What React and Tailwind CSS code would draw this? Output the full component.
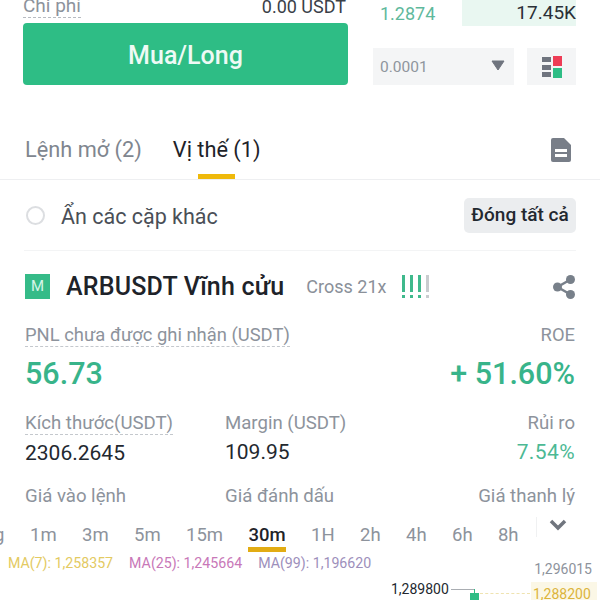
import React from "react";

const FONT = { fontFamily: "Roboto, sans-serif" };
const intervals = ["1m", "3m", "5m", "15m", "30m", "1H", "2h", "4h", "6h", "8h"];

function Stat({ label, value, dashed, right, green, className }) {
  return (
    <div className={`flex flex-col ${right ? "items-end" : "items-start"} ${className || ""}`}>
      <span
        className={`text-[18.6px] leading-[22px] text-[#8d939c] ${
          dashed ? "border-b border-dashed border-[#c4c8cd]" : ""
        }`}
      >
        {label}
      </span>
      {value && (
        <span className={`mt-[5px] text-[21px] leading-[26px] ${green ? "tracking-[0.4px] text-[#4cb994]" : "text-[#23282f]"}`}>
          {value}
        </span>
      )}
    </div>
  );
}

export default function App() {
  return (
    <div className="relative h-[600px] w-[600px] overflow-hidden bg-white text-[#1e2329]" style={FONT}>
      {/* order form bottom */}
      <div className="flex h-[123px] items-start pl-[23px] pr-[24px]">
        <div className="w-[325px]">
          <div className="-mt-[11px] flex h-[34px] items-center justify-between pr-[2px]">
            <span className="border-b border-dashed border-[#b7bbc1] text-[19px] leading-[22px] text-[#8d939c]">Chi phí</span>
            <span className="text-[18px] text-[#3a4048]">0.00 USDT</span>
          </div>
          <button className="flex h-[62px] w-full items-center justify-center rounded-[4px] bg-[#2ebd85] pt-[3px] text-[25px] font-medium text-[#eefaf5]">
            Mua/Long
          </button>
        </div>
        <div className="ml-[25px] flex w-[203px] flex-col">
          <div className="flex h-[26px] items-center">
            <span className="w-[89px] pl-[7px] text-[18px] text-[#5fb99c]">1.2874</span>
            <span className="flex h-[26px] flex-1 items-center justify-end bg-[#e9f7f1] text-[19px] text-[#2b3037]">17.45K</span>
          </div>
          <div className="mt-[22px] flex h-[37px] gap-[13px]">
            <div className="flex w-[141px] items-center justify-between bg-[#f4f5f6] pl-[7px] pr-[9px]">
              <span className="pt-[3px] text-[15.5px] text-[#8f959d]">0.0001</span>
              <svg width="14" height="11" viewBox="0 0 14 11" className="-mt-[3px]">
                <path d="M1 1h12L7 10z" fill="#6f747e" stroke="#6f747e" strokeLinejoin="round" />
              </svg>
            </div>
            <div className="flex w-[49px] items-center justify-center bg-[#f4f5f6]">
              <svg width="20" height="22" viewBox="0 0 20 22">
                <rect x="0" y="1" width="9" height="5" fill="#6f747e" />
                <rect x="0" y="9" width="9" height="5" fill="#6f747e" />
                <rect x="0" y="16" width="9" height="5" fill="#6f747e" />
                <rect x="11" y="0" width="9" height="10" fill="#ee3d56" />
                <rect x="11" y="12" width="9" height="10" fill="#2ebd85" />
              </svg>
            </div>
          </div>
        </div>
      </div>

      {/* tabs */}
      <div className="flex h-[57px] items-start justify-between border-b border-[#eeeff1] pl-[25px] pr-[29px]">
        <div className="flex gap-[31px] pt-[12px]">
          <span className="text-[21.75px] leading-[30px] text-[#80868f]">Lệnh mở (2)</span>
          <div className="relative">
            <span className="text-[21.75px] leading-[30px] text-[#1e2329]">Vị thế (1)</span>
            <span className="absolute left-[25px] top-[39px] h-[5px] w-[37px] bg-[#efb90b]" />
          </div>
        </div>
        <svg width="20" height="24" viewBox="0 0 20 24" className="mt-[15px]">
          <path d="M2 0h11l7 7v15a2 2 0 0 1-2 2H2a2 2 0 0 1-2-2V2a2 2 0 0 1 2-2z" fill="#787e88" />
          <rect x="4" y="11" width="12" height="3" fill="#fff" />
          <rect x="4" y="16" width="12" height="3" fill="#fff" />
        </svg>
      </div>

      {/* filter row */}
      <div className="mx-[24px] flex h-[71px] items-center justify-between border-b border-[#f3f4f5]">
        <div className="flex items-center">
          <span className="ml-[2px] h-[19px] w-[19px] rounded-full border-2 border-[#dcdee1]" />
          <span className="ml-[16px] pt-[5px] text-[21.5px] text-[#4a4f57]">Ẩn các cặp khác</span>
        </div>
        <button className="flex h-[35px] w-[112px] items-center justify-center rounded-[5px] bg-[#ebedef] text-[19px] font-medium text-[#23282f]">
          Đóng tất cả
        </button>
      </div>

      {/* position card */}
      <div className="pl-[25px] pr-[25px]">
        <div className="flex h-[71px] items-center">
          <span className="flex h-[25px] w-[25px] items-center justify-center bg-[#35bb88] text-[15px] text-[#d5f5e8]">M</span>
          <span className="ml-[16px] text-[25px] font-medium tracking-[0.2px] text-[#1e2329]">ARBUSDT Vĩnh cửu</span>
          <span className="ml-[22px] text-[18px] text-[#8a9099]">Cross 21x</span>
          <div className="ml-[16px] flex gap-[5px]">
            {["#3fb98c", "#3fb98c", "#3fb98c", "#c9cccf"].map((c, i) => (
              <span key={i} className="flex flex-col gap-[3px]">
                <span className="h-[17px] w-[3px]" style={{ background: c }} />
                <span className="h-[3px] w-[3px]" style={{ background: c }} />
              </span>
            ))}
          </div>
          <svg width="22" height="24" viewBox="0 0 22 24" className="ml-auto">
            <g fill="#78808a">
              <circle cx="17.5" cy="4.5" r="4.5" />
              <circle cx="4.5" cy="12" r="4.5" />
              <circle cx="17.5" cy="19.5" r="4.5" />
            </g>
            <path d="M17.5 4.5L4.5 12l13 7.5" fill="none" stroke="#78808a" strokeWidth="2.5" />
          </svg>
        </div>

        <div className="mt-[2px] flex items-start justify-between">
          <span className="border-b border-dashed border-[#c4c8cd] text-[18.4px] leading-[22px] text-[#8d939c]">
            PNL chưa được ghi nhận (USDT)
          </span>
          <span className="text-[18.4px] leading-[22px] text-[#8d939c]">ROE</span>
        </div>
        <div className="mt-[7px] flex h-[40px] items-center justify-between text-[30.5px] font-medium text-[#38b48a]">
          <span>56.73</span>
          <span>+ 51.60%</span>
        </div>

        <div className="mt-[18px] flex">
          <Stat className="w-[200px]" label="Kích thước(USDT)" value="2306.2645" dashed />
          <Stat className="flex-1" label="Margin (USDT)" value="109.95" />
          <Stat right green label="Rủi ro" value="7.54%" />
        </div>
        <div className="mt-[19px] flex">
          <Stat className="w-[200px]" label="Giá vào lệnh" />
          <Stat className="flex-1" label="Giá đánh dấu" />
          <Stat right label="Giá thanh lý" />
        </div>
      </div>

      {/* chart panel laid over the bottom of the card */}
      <div className="absolute inset-x-0 top-[505px] h-[95px] bg-white">
        <div className="flex h-[46px] items-start">
          <div className="flex flex-1 gap-[25.4px] pl-[30px] pt-[19px]">
            {intervals.map((t) => (
              <div key={t} className="relative">
                <span className={`text-[18.5px] leading-[22px] ${t === "30m" ? "font-medium text-[#1e2329]" : "text-[#8d939c]"}`}>
                  {t}
                </span>
                {t === "30m" && <span className="absolute inset-x-0 top-[23px] h-[5px] bg-[#e2ac13]" />}
              </div>
            ))}
          </div>
          <div className="mr-[24px] mt-[12px] flex h-[20px] w-[40px] justify-end border-l border-[#f0f1f2] pr-[9px] pt-[2px]">
            <svg width="18" height="12" viewBox="0 0 18 12">
              <path d="M2 2l7 7 7-7" fill="none" stroke="#70757e" strokeWidth="3.5" />
            </svg>
          </div>
          <span className="absolute -left-[6px] top-[19px] text-[18.5px] leading-[22px] text-[#8d939c]">g</span>
        </div>
        <div className="relative h-[49px]">
          <div className="flex gap-[16px] pl-[8px] pt-[2px] text-[14.2px] leading-[20px]">
            <span className="text-[#e3ca62]">MA(7): 1,258357</span>
            <span className="text-[#c878b8]">MA(25): 1,245664</span>
            <span className="text-[#9d8fbb]">MA(99): 1,196620</span>
          </div>
          <span className="absolute right-[8px] top-[8px] text-[14px] text-[#8d939c]">1,296015</span>
          <span className="absolute left-[391px] top-[28px] text-[14px] leading-[20px] text-[#23282f]">1,289800</span>
          <span className="absolute left-[451px] top-[38px] h-[1px] w-[24px] bg-[#a9adb2]" />
          <span className="absolute left-[474px] top-[38px] h-[5px] w-[1px] bg-[#2ebd85]" />
          <span className="absolute left-[470px] top-[42px] h-[7px] w-[9px] bg-[#2ebd85]" />
          <span className="absolute left-[480px] top-[42px] w-[50px] border-t border-dashed border-[#efe3b0]" />
          <span className="absolute left-[531px] top-[31px] h-[18px] w-[66px] bg-[#fbf7e6] pl-[2px] pt-[2px] text-[14px] leading-[20px] text-[#dcb43a]">1,288200</span>
        </div>
      </div>
    </div>
  );
}
